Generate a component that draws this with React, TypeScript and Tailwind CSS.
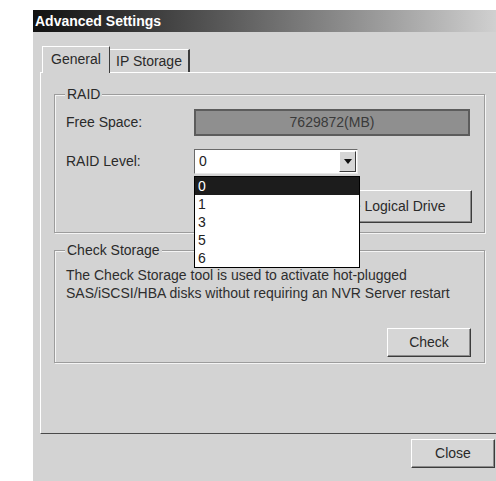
import React from "react";

const raised =
  "border border-t-white border-l-white border-r-[#3c3c3c] border-b-[#3c3c3c] shadow-[inset_-1px_-1px_0_#8c8c8c] bg-[#d6d6d6]";

function Button({ label, className }: { label: string; className?: string }) {
  return (
    <div
      className={`${raised} flex items-center justify-center text-[14px] text-[#2a2a2a] ${className ?? ""}`}
    >
      {label}
    </div>
  );
}

function Group({
  title,
  children,
  className,
}: {
  title: string;
  children: React.ReactNode;
  className?: string;
}) {
  return (
    <fieldset
      className={`w-[431px] border border-[#9c9c9c] shadow-[inset_1px_1px_0_#f4f4f4,1px_1px_0_#f4f4f4] ${className ?? ""}`}
    >
      <legend className="ml-[10px] bg-[#d3d3d3] px-[2px] text-[14px] leading-[16px] text-[#2a2a2a]">
        {title}
      </legend>
      {children}
    </fieldset>
  );
}

const levels = ["0", "1", "3", "5", "6"];

export default function App() {
  return (
    <div className="h-[481px] w-[496px] overflow-hidden bg-white pl-[33px] pt-[10px] font-['Liberation_Sans',Arial,sans-serif]">
      <div className="flex h-[480px] w-[480px] flex-col bg-[#d3d3d3]">
        {/* title bar */}
        <div className="flex h-[22px] items-center bg-linear-to-r from-[#121212] via-[#6e6e6e] to-[#d8d8d8] pl-[2px] text-[14px] font-bold text-white">
          Advanced Settings
        </div>

        <div className="flex flex-col px-[7px] pt-[13px]">
          {/* tabs */}
          <div className="relative z-10 flex h-[27px] items-end pl-[2px]">
            <div className="-mb-px flex h-[27px] w-[68px] items-center justify-center border-l border-t border-r border-l-white border-t-white border-r-[#3c3c3c] bg-[#d3d3d3] pb-[1px] text-[14px] text-[#2a2a2a]">
              General
            </div>
            <div className="flex h-[23px] w-[80px] items-center justify-center border-r-2 border-t border-t-white border-r-[#3c3c3c] text-[14px] text-[#2a2a2a]">
              IP Storage
            </div>
          </div>

          {/* tab page */}
          <div className="flex h-[362px] flex-col border border-t-white border-l-white border-r-[#3c3c3c] border-b-[#4a4a4a] pl-[13px] pt-[13px]">
            <Group title="RAID" className="pb-[9px]">
              <div className="flex flex-col pl-[11px] pr-[14px]">
                <div className="mt-[7px] flex h-[27px] items-center">
                  <span className="w-[128px] text-[14px] text-[#2a2a2a]">Free Space:</span>
                  <div className="flex h-[27px] flex-1 items-center justify-center border-2 border-[#5c5c5c] bg-[#8f8f8f] text-[14px] text-[#3a3a3a]">
                    7629872(MB)
                  </div>
                </div>

                <div className="mt-[13px] flex h-[25px] items-center">
                  <span className="w-[128px] text-[14px] text-[#2a2a2a]">RAID Level:</span>
                  <div className="relative z-20 h-[25px] w-[164px]">
                    <div className="flex h-full items-center border border-t-[#6a6a6a] border-l-[#6a6a6a] border-r-[#e8e8e8] border-b-[#e8e8e8] bg-white">
                      <span className="flex-1 pl-[4px] text-[14px] text-[#222]">0</span>
                      <div className="mr-[1px] flex h-[21px] w-[17px] items-center justify-center border border-t-white border-l-white border-r-[#3c3c3c] border-b-[#3c3c3c] bg-[#d6d6d6]">
                        <svg width="8" height="5" viewBox="0 0 8 5">
                          <path d="M0 0h8L4 5z" fill="#111" />
                        </svg>
                      </div>
                    </div>
                    {/* open option list */}
                    <ul className="absolute left-0 top-full mt-[2px] w-[166px] border border-black bg-white text-[14px] leading-[18px] text-[#222]">
                      {levels.map((l, i) => (
                        <li
                          key={l}
                          className={
                            i === 0
                              ? "h-[18px] bg-[#1c1c1c] pl-[3px] text-white"
                              : "h-[18px] pl-[3px]"
                          }
                        >
                          {l}
                        </li>
                      ))}
                    </ul>
                  </div>
                </div>

                <Button
                  label="Create Logical Drive"
                  className="-mr-[2px] mt-[16px] h-[33px] w-[180px] self-end"
                />
              </div>
            </Group>

            <Group title="Check Storage" className="mt-[9px] pb-[5px]">
              <div className="flex flex-col pl-[11px] pr-[13px]">
                <p className="mt-[8px] text-[14px] leading-[18px] text-[#2e2e2e]">
                  The Check Storage tool is used to activate hot-plugged
                  <br />
                  SAS/iSCSI/HBA disks without requiring an NVR Server restart
                </p>
                <Button label="Check" className="mt-[26px] h-[29px] w-[84px] self-end" />
              </div>
            </Group>
          </div>

          <div className="flex justify-end pr-[11px] pt-[5px]">
            <Button label="Close" className="h-[29px] w-[84px]" />
          </div>
        </div>
      </div>
    </div>
  );
}
